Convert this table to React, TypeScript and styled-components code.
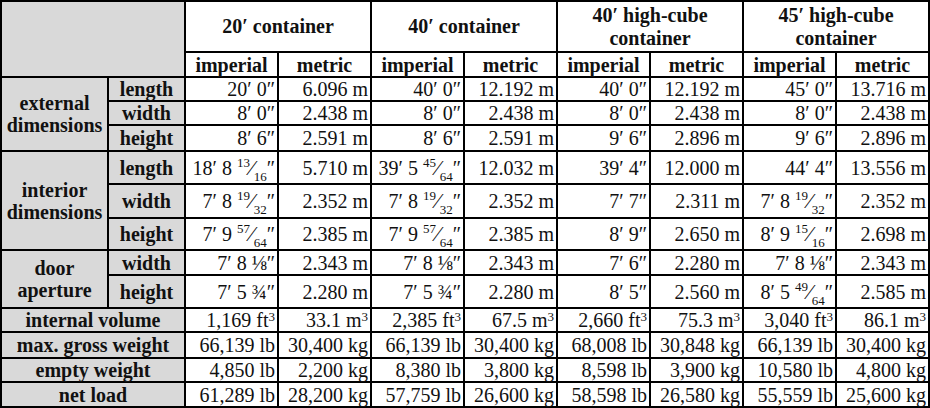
import React from "react";
import styled, { createGlobalStyle } from "styled-components";

const GlobalStyle = createGlobalStyle`
  html, body {
    margin: 0;
    padding: 0;
    background: #fff;
    font-family: "Liberation Serif", "DejaVu Serif", serif;
  }
  table, th, td {
    font-family: "Liberation Serif", "DejaVu Serif", serif;
  }
`;

const Table = styled.table`
  border-collapse: collapse;
  table-layout: fixed;
  width: 929px;
  font-family: "Liberation Serif", "DejaVu Serif", serif;
  font-size: 20px;
  color: #111;
  border: 2px solid #000;
`;

const Row = styled.tr<{ $h: number }>`
  height: ${(p) => p.$h}px;
`;

const Corner = styled.td`
  background: #d9d9d9;
  border: 2px solid #000;
`;

const Title = styled.th`
  background: #fff;
  border: 2px solid #000;
  font-weight: bold;
  text-align: center;
  line-height: 23px;
  padding: 0 8px;
`;

const Unit = styled.th`
  background: #fff;
  border: 2px solid #000;
  font-weight: bold;
  text-align: center;
  line-height: 20px;
  padding: 0;
`;

const Label = styled.th`
  background: #d9d9d9;
  border: 2px solid #000;
  font-weight: bold;
  text-align: center;
  line-height: 22px;
  padding: 0 2px;
`;

const Cell = styled.td`
  background: #fff;
  border: 2px solid #000;
  text-align: right;
  padding: 0 2px 0 0;
  line-height: 20px;
  white-space: nowrap;
`;

const Num = styled.span`
  font-size: 13px;
  vertical-align: 8px;
  line-height: 0;
`;

const Den = styled.span`
  font-size: 13px;
  vertical-align: -6px;
  line-height: 0;
`;

const Slash = styled.span`
  font-size: 22px;
`;

const Sup = styled.span`
  font-size: 13px;
  vertical-align: 6px;
  line-height: 0;
`;

const frac = (lead: string, n: string, d: string) => (
  <>
    {lead} <Num>{n}</Num>
    <Slash>⁄</Slash>
    <Den>{d}</Den>″
  </>
);

const ft3 = (v: string) => (
  <>
    {v} ft<Sup>3</Sup>
  </>
);

const m3 = (v: string) => (
  <>
    {v} m<Sup>3</Sup>
  </>
);

const containers = [
  "20′ container",
  "40′ container",
  "40′ high-cube container",
  "45′ high-cube container",
];

type Group = {
  label: string;
  rows: { name: string; h: number; values: React.ReactNode[] }[];
};

const groups: Group[] = [
  {
    label: "external dimensions",
    rows: [
      {
        name: "length",
        h: 24,
        values: ["20′ 0″", "6.096 m", "40′ 0″", "12.192 m", "40′ 0″", "12.192 m", "45′ 0″", "13.716 m"],
      },
      {
        name: "width",
        h: 24,
        values: ["8′ 0″", "2.438 m", "8′ 0″", "2.438 m", "8′ 0″", "2.438 m", "8′ 0″", "2.438 m"],
      },
      {
        name: "height",
        h: 26,
        values: ["8′ 6″", "2.591 m", "8′ 6″", "2.591 m", "9′ 6″", "2.896 m", "9′ 6″", "2.896 m"],
      },
    ],
  },
  {
    label: "interior dimensions",
    rows: [
      {
        name: "length",
        h: 33,
        values: [frac("18′ 8", "13", "16"), "5.710 m", frac("39′ 5", "45", "64"), "12.032 m", "39′ 4″", "12.000 m", "44′ 4″", "13.556 m"],
      },
      {
        name: "width",
        h: 34,
        values: [frac("7′ 8", "19", "32"), "2.352 m", frac("7′ 8", "19", "32"), "2.352 m", "7′ 7″", "2.311 m", frac("7′ 8", "19", "32"), "2.352 m"],
      },
      {
        name: "height",
        h: 32,
        values: [frac("7′ 9", "57", "64"), "2.385 m", frac("7′ 9", "57", "64"), "2.385 m", "8′ 9″", "2.650 m", frac("8′ 9", "15", "16"), "2.698 m"],
      },
    ],
  },
  {
    label: "door aperture",
    rows: [
      {
        name: "width",
        h: 25,
        values: ["7′ 8 ⅛″", "2.343 m", "7′ 8 ⅛″", "2.343 m", "7′ 6″", "2.280 m", "7′ 8 ⅛″", "2.343 m"],
      },
      {
        name: "height",
        h: 33,
        values: ["7′ 5 ¾″", "2.280 m", "7′ 5 ¾″", "2.280 m", "8′ 5″", "2.560 m", frac("8′ 5", "49", "64"), "2.585 m"],
      },
    ],
  },
];

const totals: { name: string; h: number; values: React.ReactNode[] }[] = [
  {
    name: "internal volume",
    h: 23,
    values: [ft3("1,169"), m3("33.1"), ft3("2,385"), m3("67.5"), ft3("2,660"), m3("75.3"), ft3("3,040"), m3("86.1")],
  },
  {
    name: "max. gross weight",
    h: 26,
    values: ["66,139 lb", "30,400 kg", "66,139 lb", "30,400 kg", "68,008 lb", "30,848 kg", "66,139 lb", "30,400 kg"],
  },
  {
    name: "empty weight",
    h: 24,
    values: ["4,850 lb", "2,200 kg", "8,380 lb", "3,800 kg", "8,598 lb", "3,900 kg", "10,580 lb", "4,800 kg"],
  },
  {
    name: "net load",
    h: 25,
    values: ["61,289 lb", "28,200 kg", "57,759 lb", "26,600 kg", "58,598 lb", "26,580 kg", "55,559 lb", "25,600 kg"],
  },
];

const colWidths = [107, 77, 93, 93, 93, 93, 93, 93, 93, 93];

export default function App() {
  return (
    <>
      <GlobalStyle />
      <Table>
        <colgroup>
          {colWidths.map((w, i) => (
            <col key={i} style={{ width: w }} />
          ))}
        </colgroup>
        <thead>
          <Row $h={51}>
            <Corner colSpan={2} rowSpan={2} />
            {containers.map((c) => (
              <Title key={c} colSpan={2}>
                {c}
              </Title>
            ))}
          </Row>
          <Row $h={25}>
            {containers.map((c) => (
              <React.Fragment key={c}>
                <Unit>imperial</Unit>
                <Unit>metric</Unit>
              </React.Fragment>
            ))}
          </Row>
        </thead>
        <tbody>
          {groups.map((g) =>
            g.rows.map((r, i) => (
              <Row key={g.label + r.name} $h={r.h}>
                {i === 0 && <Label rowSpan={g.rows.length}>{g.label}</Label>}
                <Label>{r.name}</Label>
                {r.values.map((v, j) => (
                  <Cell key={j}>{v}</Cell>
                ))}
              </Row>
            ))
          )}
          {totals.map((r) => (
            <Row key={r.name} $h={r.h}>
              <Label colSpan={2}>{r.name}</Label>
              {r.values.map((v, j) => (
                <Cell key={j}>{v}</Cell>
              ))}
            </Row>
          ))}
        </tbody>
      </Table>
    </>
  );
}
